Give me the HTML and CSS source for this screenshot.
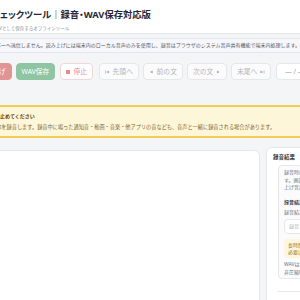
FILE: index.html
```html
<!DOCTYPE html>
<html lang="ja">
<head>
    <meta charset="UTF-8">
    <meta name="viewport" content="width=device-width, initial-scale=1.0">
    <title>読み上げチェックツール｜録音・WAV保存対応版</title>
    <link rel="stylesheet" href="styles.css">
</head>
<body>
<div class="app">
    <header class="header">
        <h1>読み上げチェックツール｜録音・WAV保存対応版</h1>
        <p class="sub">読み上げを録音し、WAVとして保存するオフラインツール</p>
    </header>

    <div class="privacy">テキストはサーバーへ送信しません。読み上げには端末内のローカル音声のみを使用し、録音はブラウザのシステム音声共有機能で端末内処理します。</div>

    <div class="controls">
        <button class="btn btn-rec">録音＋読み上げ</button>
        <button class="btn btn-save">WAV保存</button>
        <button class="btn btn-stop"><span class="sq"></span>停止</button>
        <button class="btn btn-nav first">
            <svg viewBox="0 0 10 10"><rect x="0.5" y="1.5" width="1.4" height="7"/><path d="M9 1.5v7L3 5z"/></svg>先頭へ
        </button>
        <button class="btn btn-nav">
            <svg viewBox="0 0 10 10"><path d="M8 1.5v7L2 5z"/></svg>前の文
        </button>
        <button class="btn btn-nav">次の文
            <svg viewBox="0 0 10 10"><path d="M2 1.5v7L8 5z"/></svg>
        </button>
        <button class="btn btn-nav">末尾へ
            <svg viewBox="0 0 10 10"><path d="M1 1.5v7L7 5z"/><rect x="8.1" y="1.5" width="1.4" height="7"/></svg>
        </button>
        <span class="counter">— / —</span>
    </div>

    <div class="warn">
        <strong>録音前に他の音を止めてください</strong>
        <p>システム音声全体を録音します。録音中に鳴った通知音・動画・音楽・他アプリの音なども、音声と一緒に録音される場合があります。</p>
    </div>

    <div class="main">
        <section class="card editor"></section>
        <aside class="card side">
            <h2>録音結果</h2>
            <div class="rec-box">
                <p class="hint">録音時は、共有画面で必ず音声の共有をオンにします。画面の共有だけでなく音声も共有しないと読み上げ音声が録音されません。</p>
                <div class="label">録音結果のファイル名</div>
                <div class="small">録音結果はWAV形式で保存されます</div>
                <div class="field">録音ファイル名</div>
                <div class="note">長時間の録音ではファイルが大きくなるため、必要に応じて分割して録音してください。</div>
                <p class="small">WAVは音質の劣化がない一方で、サイズの大きい非圧縮PCM形式です。</p>
            </div>
            <div class="divider"></div>
        </aside>
    </div>
</div>
</body>
</html>
```

FILE: styles.css
```css
* {
    box-sizing: border-box;
}
html, body {
    margin: 0;
    overflow: hidden;
}
body {
    background: #f4f5f7;
    font-family: "Noto Sans", "Noto Sans CJK JP", sans-serif;
    color: #1f2937;
}
.app {
    width: 460px;
    margin-left: -48px;
}
.header {
    background: #fff;
    border-bottom: 1px solid #e5e7eb;
    padding: 9px 0 2px;
}
.header h1 {
    margin: 0 0 0 2px;
    font-size: 9.3px;
    line-height: 12px;
    font-weight: 700;
    font-feature-settings: "palt";
    color: #1f2937;
    white-space: nowrap;
}
.header .sub {
    margin: 4px 0 0;
    font-size: 4.5px;
    line-height: 6px;
    color: #8a8f98;
    white-space: nowrap;
}
.privacy {
    margin-top: 4px;
    background: #f7f7fb;
    border: 1px solid #e4e5ee;
    padding: 3px 8px;
    font-size: 5px;
    line-height: 7px;
    color: #555;
    white-space: nowrap;
}
.controls {
    margin-top: 10px;
    display: flex;
    align-items: center;
    gap: 4px;
}
.btn {
    font-family: inherit;
    font-size: 6.8px;
    line-height: 9px;
    padding: 3px 5px;
    border: 1px solid #e6e7eb;
    border-radius: 4px;
    background: #fbfbfc;
    color: #b3b6bd;
    display: inline-flex;
    align-items: center;
    gap: 3px;
    white-space: nowrap;
}
.btn svg {
    width: 6px;
    height: 6px;
    fill: #a9acb3;
}
.btn-rec {
    background: #e29494;
    border-color: #e29494;
    color: #fff;
}
.btn-save {
    background: #8fc5a2;
    border-color: #8fc5a2;
    color: #fff;
}
.btn-stop {
    background: #fff;
    border-color: #f2d6d6;
    color: #e68c8c;
    margin-left: 1px;
}
.btn-stop .sq {
    width: 4px;
    height: 4px;
    background: #e68c8c;
}
.btn-nav {
    width: 40px;
    justify-content: center;
}
.btn-nav.first {
    margin-left: 2px;
}
.counter {
    margin-left: 1px;
    font-size: 6.8px;
    line-height: 9px;
    padding: 3px 8px;
    border: 1px solid #e6e7eb;
    border-radius: 4px;
    background: #fff;
    color: #a0a4ab;
    width: 60px;
}
.warn {
    margin-top: 25px;
    background: #fef6d9;
    border: 2px solid #f3cb57;
    border-radius: 4px;
    padding: 5px 6px;
    color: #5c4300;
}
.warn strong {
    display: block;
    font-size: 5px;
    line-height: 8px;
}
.warn p {
    margin: 3px 0 0;
    font-size: 5.2px;
    line-height: 8px;
    color: #7b6630;
    white-space: nowrap;
}
.main {
    margin-top: 9px;
    display: grid;
    grid-template-columns: 1fr 146px;
    gap: 6px;
    align-items: start;
}
.card {
    background: #fff;
    border: 1px solid #e5e7eb;
    border-radius: 6px;
}
.editor {
    margin-top: 3px;
    height: 300px;
}
.side {
    padding: 5px 6px 0;
    height: 300px;
}
.side h2 {
    margin: 0;
    font-size: 5.5px;
    line-height: 8px;
    color: #333;
}
.rec-box {
    margin: 4px 0 0 5px;
    border: 1px solid #e5e7eb;
    border-radius: 4px;
    background: #fbfbfc;
    padding: 3px 5px 2px;
    font-size: 5px;
    color: #6b7280;
}
.hint {
    margin: 0;
    line-height: 7.5px;
}
.label {
    margin-top: 6px;
    font-weight: 700;
    line-height: 8px;
    color: #374151;
}
.small {
    margin: 3px 0 0;
    line-height: 7.5px;
}
.field {
    margin-top: 3px;
    height: 15px;
    border: 1px solid #e5e7eb;
    border-radius: 4px;
    background: #fff;
    padding: 0 4px;
    line-height: 13px;
    color: #b0b4bb;
}
.note {
    margin-top: 5px;
    background: #fef6dc;
    border-radius: 3px;
    padding: 2.5px 4px;
    line-height: 7px;
    color: #9a7420;
}
.divider {
    margin: 12px 0 0 5px;
    border-top: 1px solid #e5e7eb;
}
```
